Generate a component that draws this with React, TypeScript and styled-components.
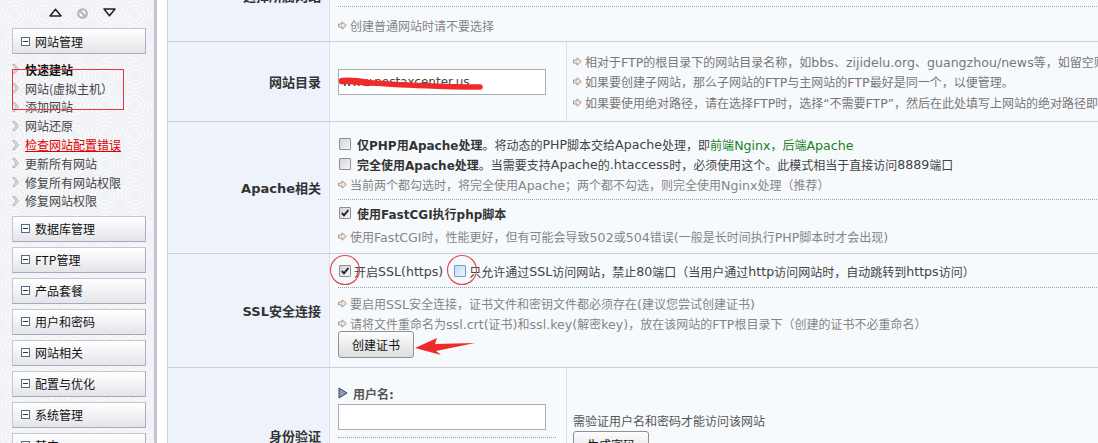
import React from 'react';
import styled, { createGlobalStyle } from 'styled-components';

const GlobalStyle = createGlobalStyle`
  html, body { margin: 0; padding: 0; background: #fff; overflow: hidden; }
  body {
    font-family: "DejaVu Sans", "Noto Sans CJK SC", sans-serif;
    font-size: 12px;
    color: #333;
  }
  * { box-sizing: border-box; }
`;

const Page = styled.div`
  display: flex;
  align-items: flex-start;
  width: 1400px;
  height: 443px;
  overflow: hidden;
`;

/* ---------------- Sidebar ---------------- */

const Sidebar = styled.aside`
  position: relative;
  flex: none;
  width: 157px;
  height: 480px;
  padding: 0 8px 0 12px;
  background-color: #f1f2f6;
  background-image:
    radial-gradient(circle at 50% 50%, transparent 0 5px, rgba(255,255,255,0.75) 5px 6px, transparent 6px 9px, rgba(255,255,255,0.75) 9px 10px, transparent 10px 13px, rgba(255,255,255,0.6) 13px 14px, transparent 14px);
  background-size: 30px 30px;
  border-right: 3px solid #c3c4d8;
  font-family: "Noto Sans CJK SC", "DejaVu Sans", sans-serif;
`;

const TopIcons = styled.div`
  display: flex;
  align-items: flex-start;
  height: 28px;
  padding: 8px 0 0 37px;
  gap: 15px;
`;

const MenuHeader = styled.div`
  display: flex;
  align-items: center;
  gap: 5px;
  width: 134px;
  height: 26px;
  margin-bottom: 5px;
  padding-left: 8px;
  background: linear-gradient(#ffffff, #f4f4f6 45%, #e4e4e9);
  border: 1px solid #c6c6d0;
  border-right-color: #aeaec0;
  border-bottom-color: #a9a9bb;
  color: #111;
  font-size: 12px;
`;

const MinusBox = styled.span`
  position: relative;
  flex: none;
  width: 9px;
  height: 9px;
  border: 1px solid #4f6e8e;
  background: #fff;
  &::after {
    content: "";
    position: absolute;
    left: 1px;
    top: 3px;
    width: 5px;
    height: 1px;
    background: #333;
  }
`;

const MenuList = styled.ul`
  list-style: none;
  margin: 0 0 5.5px;
  padding: 1px 0 0;
`;

const MenuItem = styled.li<{ $bold?: boolean; $alert?: boolean }>`
  display: flex;
  align-items: center;
  gap: 6px;
  height: 18.8px;
  font-size: 12px;
  white-space: nowrap;
  font-weight: ${p => (p.$bold ? 'bold' : 'normal')};
  color: ${p => (p.$alert ? '#e00000' : p.$bold ? '#111' : '#444')};
  text-decoration: ${p => (p.$alert ? 'underline' : 'none')};
`;

const MarkBox = styled.div`
  position: absolute;
  left: 12px;
  top: 69px;
  width: 112px;
  height: 41px;
  border: 1px solid #e8363c;
  pointer-events: none;
`;

/* ---------------- Main table ---------------- */

const Main = styled.main`
  flex: none;
  width: 1100px;
  margin: -50px 0 0 10px;
  border-left: 1px solid #c9ced8;
`;

const Row = styled.div<{ $h: number }>`
  display: grid;
  grid-template-columns: 162px 1fr;
  grid-template-rows: minmax(${p => p.$h}px, auto);
  border-bottom: 1px solid #c9ced8;
`;

const Label = styled.div`
  display: flex;
  align-items: center;
  justify-content: flex-end;
  padding-right: 8px;
  background: #eef2fa;
  border-right: 1px solid #dde2ea;
  font-family: "DejaVu Sans", "Noto Sans CJK SC", sans-serif;
  font-size: 13px;
  font-weight: bold;
  color: #333;
  white-space: nowrap;
`;

const Value = styled.div<{ $pt?: number; $bottom?: boolean }>`
  position: relative;
  display: flex;
  flex-direction: column;
  justify-content: ${p => (p.$bottom ? 'flex-end' : 'flex-start')};
  padding: ${p => p.$pt ?? 0}px 8px ${p => (p.$bottom ? 6 : 0)}px;
  background: #f7fafd;
  min-width: 0;
`;

const SplitValue = styled.div`
  display: grid;
  grid-template-columns: 236px 1fr;
  background: #f7fafd;
  min-width: 0;
`;

const SubLeft = styled.div<{ $center?: boolean; $pt?: number }>`
  display: flex;
  flex-direction: column;
  justify-content: ${p => (p.$center ? 'center' : 'flex-start')};
  padding: ${p => p.$pt ?? 0}px 10px 0 8px;
`;

const SubRight = styled.div<{ $pt?: number }>`
  display: flex;
  flex-direction: column;
  justify-content: ${p => (p.$pt === undefined ? 'center' : 'flex-start')};
  padding: ${p => p.$pt ?? 0}px 0 0 6px;
  border-left: 1px solid #dde2ea;
  white-space: nowrap;
  overflow: hidden;
`;

const Line = styled.div<{ $mt?: number }>`
  display: flex;
  align-items: center;
  height: 20px;
  margin-top: ${p => p.$mt ?? 0}px;
  white-space: nowrap;
  color: #444;
`;

const Hint = styled.div<{ $mt?: number }>`
  display: flex;
  align-items: center;
  gap: 3px;
  height: 20px;
  margin-top: ${p => p.$mt ?? 0}px;
  white-space: nowrap;
  color: #858585;
`;

const Divider = styled.div<{ $mt?: number; $mb?: number }>`
  height: 0;
  margin-top: ${p => p.$mt ?? 0}px;
  margin-bottom: ${p => p.$mb ?? 0}px;
  border-top: 1px dotted #9aa2ae;
`;

const Strong = styled.b`
  font-weight: bold;
  color: #333;
`;

const Green = styled.span`
  color: #1b7f1b;
`;

const Lat = styled.span`
  font-size: 12.6px;
`;

const Box = styled.span<{ $hover?: boolean; $gap?: number; $ml?: number }>`
  display: inline-flex;
  align-items: center;
  justify-content: center;
  flex: none;
  width: 12px;
  height: 12px;
  margin: 0 ${p => p.$gap ?? 4}px 0 ${p => p.$ml ?? 1}px;
  border: 1px solid ${p => (p.$hover ? '#6f9bcb' : '#8e8e98')};
  border-radius: 1px;
  background: ${p =>
    p.$hover
      ? 'linear-gradient(135deg, #c9dcf0, #eef5fc)'
      : 'linear-gradient(135deg, #d4d4d8, #f6f6f6)'};
`;

const TextInput = styled.input`
  display: block;
  width: 208px;
  height: 26px;
  padding: 0 3px;
  border: 1px solid #a7adb6;
  background: #fff;
  font-family: "DejaVu Sans", sans-serif;
  font-size: 12px;
  color: #444;
  outline: none;
`;

const InputWrap = styled.div<{ $mt?: number }>`
  position: relative;
  width: 208px;
  margin-top: ${p => p.$mt ?? 0}px;
`;

const Scribble = styled.svg`
  position: absolute;
  left: 0;
  top: 7px;
  pointer-events: none;
`;

const Button = styled.button<{ $mt?: number }>`
  width: 76px;
  height: 27px;
  margin-top: ${p => p.$mt ?? 0}px;
  padding: 0;
  border: 1px solid #8f9090;
  border-radius: 3px;
  background: linear-gradient(#fdfdfd, #ededed 50%, #dedede);
  font-family: "Noto Sans CJK SC", sans-serif;
  font-size: 12px;
  color: #111;
`;

const FieldTitle = styled.div<{ $mt?: number }>`
  display: flex;
  align-items: center;
  gap: 5px;
  height: 20px;
  margin-top: ${p => p.$mt ?? 0}px;
  font-weight: bold;
  color: #555;
`;

const Plain = styled.div`
  height: 18px;
  line-height: 18px;
  color: #555;
`;

const HelpLine = styled.div`
  display: flex;
  align-items: center;
  gap: 3px;
  height: 20.5px;
  color: #777;
`;

const Marks = styled.svg`
  position: absolute;
  left: 0;
  top: 0;
  pointer-events: none;
`;

/* ---------------- helpers & icons ---------------- */

const tx = (s: string) =>
  s.split(/([\x21-\x7e][\x20-\x7e]*[\x21-\x7e]|[\x21-\x7e])/).map((part, i) =>
    i % 2 === 1 ? <Lat key={i}>{part}</Lat> : part
  );

const Chevron = () => (
  <svg width="7" height="10" viewBox="0 0 7 10">
    <path d="M0.5 0.5 L3 0.5 L6.5 5 L3 9.5 L0.5 9.5 L4 5 Z" fill="#d8d8d8" stroke="#b3b3b3" strokeWidth="0.8" />
  </svg>
);

const Arrow = () => (
  <svg width="9" height="9" viewBox="0 0 9 9" style={{ flex: 'none' }}>
    <path d="M0.5 3 H4 V0.8 L8.3 4.5 L4 8.2 V6 H0.5 Z" fill="#f4e6d8" stroke="#9c908a" strokeWidth="0.9" />
  </svg>
);

const Check = () => (
  <svg width="10" height="10" viewBox="0 0 10 10">
    <path d="M1.8 5 L4 7.4 L8.4 2" fill="none" stroke="#222" strokeWidth="1.9" />
  </svg>
);

const Triangle = () => (
  <svg width="10" height="12" viewBox="0 0 10 12">
    <path d="M1 1 L9 6 L1 11 Z" fill="#8c9bb8" stroke="#34466a" strokeWidth="1" />
  </svg>
);

const Checkbox = ({ checked, hover, gap, ml }: { checked?: boolean; hover?: boolean; gap?: number; ml?: number }) => (
  <Box $hover={hover} $gap={gap} $ml={ml}>{checked ? <Check /> : null}</Box>
);

const HintRow = ({ text, mt }: { text: string; mt?: number }) => (
  <Hint $mt={mt}>
    <Arrow />
    <span>{tx(text)}</span>
  </Hint>
);

const Help = ({ text }: { text: string }) => (
  <HelpLine>
    <Arrow />
    <span>{tx(text)}</span>
  </HelpLine>
);

const menuItems: { text: string; bold?: boolean; alert?: boolean }[] = [
  { text: '快速建站', bold: true },
  { text: '网站(虚拟主机）' },
  { text: '添加网站' },
  { text: '网站还原' },
  { text: '检查网站配置错误', alert: true },
  { text: '更新所有网站' },
  { text: '修复所有网站权限' },
  { text: '修复网站权限' },
];

const groups = ['数据库管理', 'FTP管理', '产品套餐', '用户和密码', '网站相关', '配置与优化', '系统管理', '其它'];

export default function App() {
  return (
    <>
      <GlobalStyle />
      <Page>
        <Sidebar>
          <TopIcons>
            <svg width="13" height="9" viewBox="0 0 13 9">
              <path d="M1 8 L6.5 1.2 L12 8 Z" fill="none" stroke="#222" strokeWidth="1.5" strokeLinejoin="round" />
            </svg>
            <svg width="11" height="11" viewBox="0 0 11 11">
              <circle cx="5.5" cy="5.5" r="4.3" fill="none" stroke="#b0b0b4" strokeWidth="2" />
              <line x1="2.6" y1="2.6" x2="8.4" y2="8.4" stroke="#b0b0b4" strokeWidth="2" />
            </svg>
            <svg width="13" height="9" viewBox="0 0 13 9">
              <path d="M1 1 L6.5 7.8 L12 1 Z" fill="none" stroke="#222" strokeWidth="1.5" strokeLinejoin="round" />
            </svg>
          </TopIcons>
          <MenuHeader>
            <MinusBox />
            网站管理
          </MenuHeader>
          <MenuList>
            {menuItems.map(m => (
              <MenuItem key={m.text} $bold={m.bold} $alert={m.alert}>
                <Chevron />
                {m.text}
              </MenuItem>
            ))}
          </MenuList>
          {groups.map(g => (
            <MenuHeader key={g}>
              <MinusBox />
              {g}
            </MenuHeader>
          ))}
          <MarkBox />
        </Sidebar>

        <Main>
          {/* row scrolled partly out of view */}
          <Row $h={91}>
            <Label>选择所属网站</Label>
            <Value $bottom>
              <Line>
                <Checkbox />
                不创建目录
              </Line>
              <Divider $mt={14} $mb={8} />
              <HintRow text="创建普通网站时请不要选择" />
            </Value>
          </Row>

          <Row $h={79}>
            <Label>网站目录</Label>
            <SplitValue>
              <SubLeft $center>
                <InputWrap>
                  <TextInput defaultValue="www.nestaxcenter.us" readOnly />
                  <Scribble width="150" height="16" viewBox="0 0 150 16">
                    <path d="M4 5 C 25 6, 45 8, 70 9 S 115 11, 142 11" fill="none" stroke="#ee2a2a" strokeWidth="5.5" strokeLinecap="round" />
                    <path d="M4 5 C 12 4, 20 5, 30 7" fill="none" stroke="#ee2a2a" strokeWidth="6.5" strokeLinecap="round" />
                  </Scribble>
                </InputWrap>
              </SubLeft>
              <SubRight>
                <Help text="相对于FTP的根目录下的网站目录名称，如bbs、zijidelu.org、guangzhou/news等，如留空则使用默认目录" />
                <Help text="如果要创建子网站，那么子网站的FTP与主网站的FTP最好是同一个，以便管理。" />
                <Help text="如果要使用绝对路径，请在选择FTP时，选择“不需要FTP”，然后在此处填写上网站的绝对路径即可" />
              </SubRight>
            </SplitValue>
          </Row>

          <Row $h={131}>
            <Label>Apache相关</Label>
            <Value $pt={12}>
              <Line>
                <Checkbox gap={6} />
                <Strong>仅PHP用Apache处理</Strong>
                {tx('。将动态的PHP脚本交给Apache处理，即')}
                <Green>{tx('前端Nginx，后端Apache')}</Green>
              </Line>
              <Line>
                <Checkbox gap={6} />
                <Strong>完全使用Apache处理</Strong>
                {tx('。当需要支持Apache的.htaccess时，必须使用这个。此模式相当于直接访问8889端口')}
              </Line>
              <HintRow text="当前两个都勾选时，将完全使用Apache；两个都不勾选，则完全使用Nginx处理（推荐）" />
              <Divider $mt={5} />
              <Line $mt={3}>
                <Checkbox checked gap={6} />
                <Strong>使用FastCGI执行php脚本</Strong>
              </Line>
              <HintRow mt={3} text="使用FastCGI时，性能更好，但有可能会导致502或504错误(一般是长时间执行PHP脚本时才会出现)" />
            </Value>
          </Row>

          <Row $h={113}>
            <Label>SSL安全连接</Label>
            <Value $pt={7}>
              <Line>
                <Checkbox checked gap={3} />
                {tx('开启SSL(https)')}
                <Checkbox hover gap={3} ml={11} />
                {tx('只允许通过SSL访问网站，禁止80端口（当用户通过http访问网站时，自动跳转到https访问）')}
              </Line>
              <Divider $mt={6} />
              <HintRow mt={5} text="要启用SSL安全连接，证书文件和密钥文件都必须存在(建议您尝试创建证书)" />
              <HintRow text="请将文件重命名为ssl.crt(证书)和ssl.key(解密key)，放在该网站的FTP根目录下（创建的证书不必重命名）" />
              <div>
                <Button $mt={-2}>创建证书</Button>
              </div>
              <Marks width="160" height="110" viewBox="0 0 160 110">
                <circle cx="15" cy="16" r="14.5" fill="none" stroke="#e0474a" strokeWidth="1.1" />
                <circle cx="132" cy="16" r="14.5" fill="none" stroke="#e0474a" strokeWidth="1.1" />
                <path d="M85 94 L107 84 L105 90 L145 89 L106 97 L111 101 Z" fill="#ee2a2a" />
              </Marks>
            </Value>
          </Row>

          <Row $h={134}>
            <Label>身份验证</Label>
            <SplitValue>
              <SubLeft $pt={15}>
                <FieldTitle>
                  <Triangle />
                  用户名:
                </FieldTitle>
                <InputWrap $mt={1}>
                  <TextInput defaultValue="" />
                </InputWrap>
                <Divider $mt={7} />
                <FieldTitle $mt={7}>
                  <Triangle />
                  密　码:
                </FieldTitle>
                <InputWrap $mt={2}>
                  <TextInput defaultValue="" />
                </InputWrap>
              </SubLeft>
              <SubRight $pt={45}>
                <Plain>需验证用户名和密码才能访问该网站</Plain>
                <div>
                  <Button>生成密码</Button>
                </div>
              </SubRight>
            </SplitValue>
          </Row>
        </Main>
      </Page>
    </>
  );
}
